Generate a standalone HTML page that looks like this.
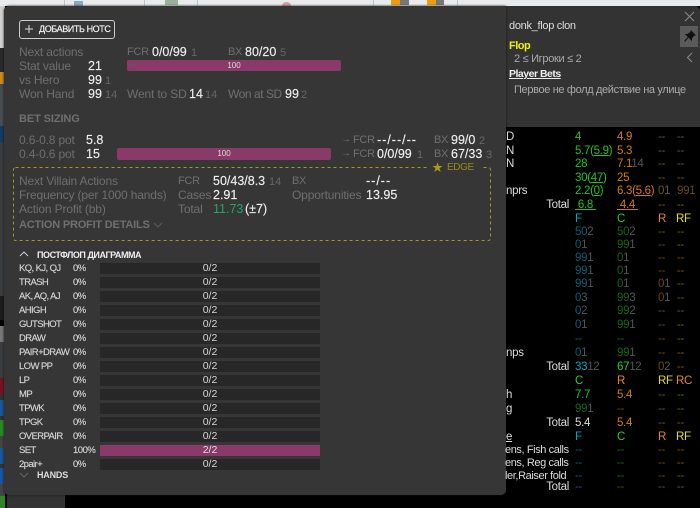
<!DOCTYPE html>
<html><head><meta charset="utf-8">
<style>
html,body{margin:0;padding:0;background:#000;}
#r{position:relative;width:700px;height:508px;overflow:hidden;background:#000;font-family:"Liberation Sans","Noto Sans CJK SC",sans-serif;filter:blur(.3px);}
#r div{position:absolute;}
.t{position:absolute;white-space:nowrap;line-height:14px;font-size:11.5px;letter-spacing:-.3px;}
.g{color:#6f6f6f;font-size:12px;letter-spacing:-.15px}
.k{color:#6f6f6f;font-size:11px;letter-spacing:-.3px}
.w{color:#eee;font-size:12.5px;letter-spacing:0;-webkit-text-stroke:.15px #eee}
.d{letter-spacing:1px}
.n{color:#666;font-size:11px;letter-spacing:0}
.h{color:#6f6f6f;font-size:11px;font-weight:bold;letter-spacing:-.1px}
.l{color:#d4d4d4;font-size:9.5px;left:19px;letter-spacing:-.6px;-webkit-text-stroke:.15px #d4d4d4}
.p{color:#d4d4d4;font-size:9.5px;left:73px;letter-spacing:-.5px;-webkit-text-stroke:.15px #d4d4d4}
.b{left:100px;width:220px;height:11px;background:#272727;color:#d5d5d5;font-size:10.5px;text-align:center;line-height:11px}
.G{color:#22c422}.O{color:#d67d0c}.dO{color:#6a4a12}.dG{color:#14661a}.dT{color:#0d5f75}.dY{color:#6a5c10}.x{color:#555}
.F{color:#05a5c8}.Cc{color:#2ad02a}.R{color:#e98a12}.RF{color:#e6e000}
.u{text-decoration:underline}
.tot{color:#ddd;width:70px;text-align:right;left:499px}
.lb{color:#ddd;left:506px}
.lc{color:#ddd;left:505px;font-size:11px;letter-spacing:-.4px}
</style></head><body>
<div id="r">
<!-- background top strip -->
<div style="left:0;top:0;width:700px;height:6px;background:#e9eaeb"></div>
<div style="left:64px;top:0;width:1px;height:6px;background:#b8c6d4"></div>
<div style="left:144px;top:0;width:1px;height:6px;background:#b8c6d4"></div>
<div style="left:197px;top:0;width:1px;height:6px;background:#b8c6d4"></div>
<div style="left:373px;top:0;width:1px;height:6px;background:#b8c6d4"></div>
<div style="left:457px;top:0;width:1px;height:6px;background:#b8c6d4"></div>
<div style="left:74px;top:1px;width:9px;height:5px;background:#8aa8c8"></div>
<div style="left:165px;top:0;width:13px;height:5px;background:#9bb09b"></div>
<div style="left:282px;top:2px;width:9px;height:4px;background:#d8a0a0;border-radius:5px 5px 0 0"></div>
<div style="left:391px;top:0;width:9px;height:5px;background:#e8a010"></div>
<div style="left:400px;top:0;width:9px;height:5px;background:#777"></div>
<div style="left:427px;top:0;width:9px;height:5px;background:#e8a010"></div>
<div style="left:436px;top:0;width:8px;height:5px;background:#777"></div>
<!-- left strip -->
<div style="left:0;top:6px;width:5px;height:42px;background:#cfcfcf"></div>
<div style="left:0;top:48px;width:5px;height:24px;background:#2a2a2a"></div>
<div style="left:0;top:72px;width:5px;height:12px;background:#c98a20"></div>
<div style="left:0;top:84px;width:5px;height:42px;background:#4a4d50"></div>
<div style="left:0;top:126px;width:5px;height:16px;background:#123a6a"></div>
<div style="left:0;top:142px;width:5px;height:154px;background:#3a3d40"></div>
<div style="left:0;top:296px;width:5px;height:24px;background:#1c1c1c"></div>
<div style="left:0;top:320px;width:5px;height:6px;background:#000"></div>
<div style="left:0;top:326px;width:5px;height:16px;background:#777"></div>
<div style="left:0;top:342px;width:5px;height:36px;background:#3a3d40"></div>
<div style="left:0;top:378px;width:5px;height:16px;background:#7a1020"></div>
<div style="left:0;top:394px;width:5px;height:6px;background:#333"></div>
<div style="left:0;top:400px;width:5px;height:16px;background:#1a55a0"></div>
<div style="left:0;top:416px;width:5px;height:4px;background:#333"></div>
<div style="left:0;top:420px;width:5px;height:16px;background:#2a8a20"></div>
<div style="left:0;top:436px;width:5px;height:12px;background:#444"></div>
<div style="left:0;top:448px;width:5px;height:16px;background:#1a55a0"></div>
<div style="left:0;top:464px;width:5px;height:4px;background:#333"></div>
<div style="left:0;top:468px;width:5px;height:16px;background:#1a55a0"></div>
<div style="left:0;top:484px;width:5px;height:12px;background:#444"></div>
<div style="left:0;top:496px;width:5px;height:12px;background:#2a8a20"></div>
<div style="left:7px;top:495px;width:58px;height:13px;background:#333"></div>

<!-- main panels -->
<div style="left:4px;top:6px;width:696px;height:121px;background:#333;border-radius:5px 5px 0 0"></div>
<div style="left:4px;top:6px;width:502px;height:489px;background:#363636;border-radius:5px 0 5px 5px;box-shadow:0 0 2px #111"></div>
<div style="left:506px;top:127px;width:194px;height:381px;background:#000"></div>

<!-- add notes -->
<div style="left:19px;top:20px;width:94px;height:17px;border:1px solid #ccc;border-radius:3px"></div>
<svg style="position:absolute;left:24px;top:24px" width="10" height="10"><path d="M5 1V9M1 5H9" stroke="#ddd" stroke-width="1"/></svg>
<span class="t" style="left:39px;top:22px;color:#f0f0f0;font-size:9px;letter-spacing:-.4px;-webkit-text-stroke:.2px #f0f0f0">ДОБАВИТЬ НОТС</span>

<span class="t g" style="left:19px;top:45px">Next actions</span>
<span class="t k" style="left:127px;top:45px">FCR</span><span class="t w" style="left:152px;top:45px">0/0/99</span><span class="t n" style="left:191px;top:46px">1</span>
<span class="t k" style="left:228px;top:45px">BX</span><span class="t w" style="left:245px;top:45px">80/20</span><span class="t n" style="left:280px;top:46px">5</span>
<span class="t g" style="left:19px;top:59px">Stat value</span><span class="t w" style="left:88px;top:59px">21</span>
<div style="left:127px;top:60px;width:214px;height:11px;background:#8a3a68;border-radius:2px;color:#ddd;font-size:8px;line-height:11px;text-align:center">100</div>
<span class="t g" style="left:19px;top:73px">vs Hero</span><span class="t w" style="left:88px;top:73px">99</span><span class="t n" style="left:105px;top:74px">1</span>
<span class="t g" style="left:19px;top:87px">Won Hand</span><span class="t w" style="left:88px;top:87px">99</span><span class="t n" style="left:105px;top:88px">14</span>
<span class="t g" style="left:127px;top:87px">Went to SD</span><span class="t w" style="left:189px;top:87px">14</span><span class="t n" style="left:205px;top:88px">14</span>
<span class="t g" style="left:228px;top:87px;letter-spacing:-.45px">Won at SD</span><span class="t w" style="left:285px;top:87px">99</span><span class="t n" style="left:301px;top:88px">2</span>

<span class="t h" style="left:19px;top:112px">BET SIZING</span>
<span class="t g" style="left:19px;top:133px">0.6-0.8 pot</span><span class="t w" style="left:86px;top:133px">5.8</span>
<span class="t g" style="left:19px;top:147px">0.4-0.6 pot</span><span class="t w" style="left:86px;top:147px">15</span>
<div style="left:117px;top:148px;width:214px;height:12px;background:#8a3a68;border-radius:2px;color:#ddd;font-size:8px;line-height:12px;text-align:center">100</div>
<span class="t k" style="left:341px;top:133px;font-size:10px">→</span><span class="t k" style="left:353px;top:133px">FCR</span><span class="t w d" style="left:377px;top:133px">--/--/--</span>
<span class="t k" style="left:434px;top:133px">BX</span><span class="t w" style="left:451px;top:133px">99/0</span><span class="t n" style="left:479px;top:134px">2</span>
<span class="t k" style="left:341px;top:147px;font-size:10px">→</span><span class="t k" style="left:353px;top:147px">FCR</span><span class="t w" style="left:377px;top:147px">0/0/99</span><span class="t n" style="left:417px;top:148px">1</span>
<span class="t k" style="left:434px;top:147px">BX</span><span class="t w" style="left:451px;top:147px">67/33</span><span class="t n" style="left:486px;top:148px">3</span>

<!-- dashed edge box -->
<svg style="position:absolute;left:13px;top:167px" width="479" height="75"><rect x=".5" y=".5" width="477" height="73" rx="2" fill="none" stroke="#a39a1e" stroke-width="1" stroke-dasharray="3 3"/></svg>
<div style="left:427px;top:162px;width:54px;height:10px;background:#363636"></div>
<span class="t" style="left:432px;top:161px;color:#a89c14;font-size:11px;letter-spacing:0">★</span>
<span class="t" style="left:447px;top:161px;color:#968c16;font-size:10px;letter-spacing:-.4px">EDGE</span>

<span class="t g" style="left:19px;top:174px">Next Villain Actions</span>
<span class="t g" style="left:19px;top:188px">Frequency (per 1000 hands)</span>
<span class="t g" style="left:19px;top:202px">Action Profit (bb)</span>
<span class="t k" style="left:178px;top:174px">FCR</span><span class="t w" style="left:213px;top:174px">50/43/8.3</span><span class="t n" style="left:269px;top:175px">14</span>
<span class="t g" style="left:178px;top:188px">Cases</span><span class="t w" style="left:213px;top:188px">2.91</span>
<span class="t g" style="left:178px;top:202px">Total</span><span class="t" style="left:213px;top:202px;font-size:12.5px;letter-spacing:0;color:#1ea866">11.73</span><span class="t w" style="left:245px;top:202px">(±7)</span>
<span class="t k" style="left:292px;top:174px">BX</span><span class="t w d" style="left:366px;top:174px">--/--</span>
<span class="t g" style="left:292px;top:188px">Opportunities</span><span class="t w" style="left:366px;top:188px">13.95</span>
<span class="t h" style="left:19px;top:218px;letter-spacing:-.2px">ACTION PROFIT DETAILS</span>
<svg style="position:absolute;left:153px;top:222px" width="10" height="6"><path d="M1 1L5 5L9 1" fill="none" stroke="#5c5c5c"/></svg>

<!-- diagram -->
<svg style="position:absolute;left:19px;top:251px" width="10" height="6"><path d="M1 5L5 1L9 5" fill="none" stroke="#ccc"/></svg>
<span class="t" style="left:37px;top:248px;color:#eee;font-size:9px;font-weight:bold;letter-spacing:-.45px">ПОСТФЛОП ДИАГРАММА</span>

<span class="t l" style="top:262px">KQ, KJ, QJ</span><span class="t p" style="top:262px">0%</span><div class="b" style="top:263px">0/2</div>
<span class="t l" style="top:276px">TRASH</span><span class="t p" style="top:276px">0%</span><div class="b" style="top:277px">0/2</div>
<span class="t l" style="top:290px">AK, AQ, AJ</span><span class="t p" style="top:290px">0%</span><div class="b" style="top:291px">0/2</div>
<span class="t l" style="top:304px">AHIGH</span><span class="t p" style="top:304px">0%</span><div class="b" style="top:305px">0/2</div>
<span class="t l" style="top:318px">GUTSHOT</span><span class="t p" style="top:318px">0%</span><div class="b" style="top:319px">0/2</div>
<span class="t l" style="top:332px">DRAW</span><span class="t p" style="top:332px">0%</span><div class="b" style="top:333px">0/2</div>
<span class="t l" style="top:346px">PAIR+DRAW</span><span class="t p" style="top:346px">0%</span><div class="b" style="top:347px">0/2</div>
<span class="t l" style="top:360px">LOW PP</span><span class="t p" style="top:360px">0%</span><div class="b" style="top:361px">0/2</div>
<span class="t l" style="top:374px">LP</span><span class="t p" style="top:374px">0%</span><div class="b" style="top:375px">0/2</div>
<span class="t l" style="top:388px">MP</span><span class="t p" style="top:388px">0%</span><div class="b" style="top:389px">0/2</div>
<span class="t l" style="top:402px">TPWK</span><span class="t p" style="top:402px">0%</span><div class="b" style="top:403px">0/2</div>
<span class="t l" style="top:416px">TPGK</span><span class="t p" style="top:416px">0%</span><div class="b" style="top:417px">0/2</div>
<span class="t l" style="top:430px">OVERPAIR</span><span class="t p" style="top:430px">0%</span><div class="b" style="top:431px">0/2</div>
<span class="t l" style="top:444px">SET</span><span class="t p" style="top:444px">100%</span><div class="b" style="top:445px;background:#8a3a68;color:#ddd">2/2</div>
<span class="t l" style="top:458px">2pair+</span><span class="t p" style="top:458px">0%</span><div class="b" style="top:459px">0/2</div>
<svg style="position:absolute;left:19px;top:472px" width="10" height="6"><path d="M1 1L5 5L9 1" fill="none" stroke="#666"/></svg>
<span class="t" style="left:37px;top:468px;color:#ddd;font-size:9px;font-weight:bold;letter-spacing:-.2px">HANDS</span>

<!-- right panel -->
<span class="t" style="left:509px;top:19px;color:#ddd;font-size:11px;letter-spacing:-.3px">donk_flop clon</span>
<span class="t" style="left:509px;top:39px;color:#f0f000;font-size:11px;font-weight:bold;letter-spacing:-.5px">Flop</span>
<span class="t" style="left:514px;top:52px;color:#aaa;font-size:11px;letter-spacing:-.3px">2 ≤ Игроки ≤ 2</span>
<span class="t" style="left:509px;top:67px;color:#eee;font-size:10.5px;font-weight:bold;letter-spacing:-.5px;text-decoration:underline">Player Bets</span>
<span class="t" style="left:514px;top:83px;color:#aaa;font-size:11px;letter-spacing:-.35px">Первое не фолд действие на улице</span>
<svg style="position:absolute;left:684px;top:11px" width="11" height="11"><path d="M1 1L10 10M10 1L1 10" stroke="#888" stroke-width="1.1"/></svg>
<div style="left:680px;top:26px;width:18px;height:21px;background:#5a5a5a"></div>
<svg style="position:absolute;left:683px;top:30px" width="13" height="13" viewBox="0 0 13 13"><path d="M8 1L12 5L10.5 5.5L8.5 8.5L8.5 10L3 4.5L4.5 4.5L7.5 2.5ZM5 7.5L1.5 11.5" fill="#111" stroke="#111"/></svg>
<svg style="position:absolute;left:686px;top:52px" width="8" height="11"><path d="M6 1L1.5 5.5L6 10" fill="none" stroke="#888" stroke-width="1.1"/></svg>

<!-- table labels -->
<span class="t lb" style="top:130px">D</span>
<span class="t lb" style="top:144px">N</span>
<span class="t lb" style="top:157px">N</span>
<span class="t lb" style="top:184px">nprs</span>
<span class="t lb" style="top:346px">nps</span>
<span class="t lb" style="top:388px">h</span>
<span class="t lb" style="top:402px">g</span>
<span class="t lb u" style="top:430px">e</span>
<span class="t lc" style="top:443px">ens, Fish calls</span>
<span class="t lc" style="top:456px">ens, Reg calls</span>
<span class="t lc" style="top:469px">ler,Raiser fold</span>
<span class="t tot" style="top:198px">Total</span>
<span class="t tot" style="top:360px">Total</span>
<span class="t tot" style="top:416px">Total</span>
<span class="t tot" style="top:480px">Total</span>

<!-- col rows -->
<span class="t G" style="left:575px;top:130px">4</span><span class="t O" style="left:617px;top:130px">4.9</span><span class="t dY" style="left:658px;top:130px">--</span><span class="t dY" style="left:677px;top:130px">--</span>
<span class="t G" style="left:575px;top:144px">5.7(<span class="u">5.9</span>)</span><span class="t O" style="left:617px;top:144px">5.3</span><span class="t dY" style="left:658px;top:144px">--</span><span class="t dY" style="left:677px;top:144px">--</span>
<span class="t G" style="left:575px;top:157px">28</span><span class="t O" style="left:617px;top:157px">7.1<span class="x">14</span></span><span class="t dY" style="left:658px;top:157px">--</span><span class="t dY" style="left:677px;top:157px">--</span>
<span class="t G" style="left:575px;top:171px">30(<span class="u">47</span>)</span><span class="t O" style="left:617px;top:171px">25</span><span class="t dY" style="left:658px;top:171px">--</span><span class="t dY" style="left:677px;top:171px">--</span>
<span class="t G" style="left:575px;top:184px">2.2(<span class="u">0</span>)</span><span class="t O" style="left:617px;top:184px">6.3(<span class="u">5.6</span>)</span><span class="t dY" style="left:658px;top:184px">01</span><span class="t dO" style="left:677px;top:184px">991</span>
<span class="t G u" style="left:575px;top:198px">&nbsp;6.8&nbsp;</span><span class="t O u" style="left:617px;top:198px">&nbsp;4.4&nbsp;</span><span class="t dY" style="left:658px;top:198px">--</span><span class="t dY" style="left:677px;top:198px">--</span>
<span class="t F" style="left:575px;top:212px">F</span><span class="t Cc" style="left:617px;top:212px">C</span><span class="t R" style="left:658px;top:212px">R</span><span class="t RF" style="left:676px;top:212px">RF</span>
<span class="t dT" style="left:575px;top:225px">50<span class="x">2</span></span><span class="t dG" style="left:617px;top:225px">50<span class="x">2</span></span><span class="t dO" style="left:658px;top:225px">--</span><span class="t dY" style="left:677px;top:225px">--</span>
<span class="t dT" style="left:575px;top:238px">0<span class="x">1</span></span><span class="t dG" style="left:617px;top:238px">99<span class="x">1</span></span><span class="t dO" style="left:658px;top:238px">--</span><span class="t dY" style="left:677px;top:238px">--</span>
<span class="t dT" style="left:575px;top:251px">99<span class="x">1</span></span><span class="t dG" style="left:617px;top:251px">0<span class="x">1</span></span><span class="t dO" style="left:658px;top:251px">--</span><span class="t dY" style="left:677px;top:251px">--</span>
<span class="t dT" style="left:575px;top:264px">99<span class="x">1</span></span><span class="t dG" style="left:617px;top:264px">0<span class="x">1</span></span><span class="t dO" style="left:658px;top:264px">--</span><span class="t dY" style="left:677px;top:264px">--</span>
<span class="t dT" style="left:575px;top:277px">99<span class="x">1</span></span><span class="t dG" style="left:617px;top:277px">0<span class="x">1</span></span><span class="t dO" style="left:658px;top:277px">0<span class="x">1</span></span><span class="t dY" style="left:677px;top:277px">--</span>
<span class="t dT" style="left:575px;top:291px">0<span class="x">3</span></span><span class="t dG" style="left:617px;top:291px">99<span class="x">3</span></span><span class="t dO" style="left:658px;top:291px">0<span class="x">1</span></span><span class="t dY" style="left:677px;top:291px">--</span>
<span class="t dT" style="left:575px;top:304px">0<span class="x">2</span></span><span class="t dG" style="left:617px;top:304px">99<span class="x">2</span></span><span class="t dO" style="left:658px;top:304px">--</span><span class="t dY" style="left:677px;top:304px">--</span>
<span class="t dT" style="left:575px;top:318px">0<span class="x">1</span></span><span class="t dG" style="left:617px;top:318px">99<span class="x">1</span></span><span class="t dO" style="left:658px;top:318px">--</span><span class="t dY" style="left:677px;top:318px">--</span>
<span class="t dT" style="left:575px;top:332px">--</span><span class="t dG" style="left:617px;top:332px">--</span><span class="t dO" style="left:658px;top:332px">--</span><span class="t dY" style="left:677px;top:332px">--</span>
<span class="t dT" style="left:575px;top:346px">0<span class="x">1</span></span><span class="t dG" style="left:617px;top:346px">99<span class="x">1</span></span><span class="t dO" style="left:658px;top:346px">--</span><span class="t dY" style="left:677px;top:346px">--</span>
<span class="t F" style="left:575px;top:360px">33<span class="x">12</span></span><span class="t Cc" style="left:617px;top:360px">67<span class="x">12</span></span><span class="t dO" style="left:658px;top:360px">0<span class="x">2</span></span><span class="t dY" style="left:677px;top:360px">--</span>
<span class="t Cc" style="left:575px;top:374px">C</span><span class="t R" style="left:617px;top:374px">R</span><span class="t RF" style="left:658px;top:374px">RF</span><span class="t R" style="left:676px;top:374px">RC</span>
<span class="t G" style="left:575px;top:388px">7.7</span><span class="t O" style="left:617px;top:388px">5.4</span><span class="t dY" style="left:658px;top:388px">--</span><span class="t dY" style="left:677px;top:388px">--</span>
<span class="t dG" style="left:575px;top:402px">99<span class="x">1</span></span><span class="t dO" style="left:617px;top:402px">--</span><span class="t dY" style="left:658px;top:402px">--</span><span class="t dY" style="left:677px;top:402px">--</span>
<span class="t" style="left:575px;top:416px;color:#ddd">5.4</span><span class="t O" style="left:617px;top:416px">5.4</span><span class="t dY" style="left:658px;top:416px">--</span><span class="t dY" style="left:677px;top:416px">--</span>
<span class="t F" style="left:575px;top:430px">F</span><span class="t Cc" style="left:617px;top:430px">C</span><span class="t R" style="left:658px;top:430px">R</span><span class="t RF" style="left:676px;top:430px">RF</span>
<span class="t dT" style="left:575px;top:443px">--</span><span class="t dG" style="left:617px;top:443px">--</span><span class="t dO" style="left:658px;top:443px">--</span><span class="t dY" style="left:677px;top:443px">--</span>
<span class="t dT" style="left:575px;top:456px">--</span><span class="t dG" style="left:617px;top:456px">--</span><span class="t dO" style="left:658px;top:456px">--</span><span class="t dY" style="left:677px;top:456px">--</span>
<span class="t dT" style="left:575px;top:469px">--</span><span class="t dG" style="left:617px;top:469px">--</span><span class="t dO" style="left:658px;top:469px">--</span><span class="t dY" style="left:677px;top:469px">--</span>
<span class="t dT" style="left:575px;top:480px">--</span><span class="t dG" style="left:617px;top:480px">--</span><span class="t dO" style="left:658px;top:480px">--</span><span class="t dY" style="left:677px;top:480px">--</span>
</div>
</body></html>
